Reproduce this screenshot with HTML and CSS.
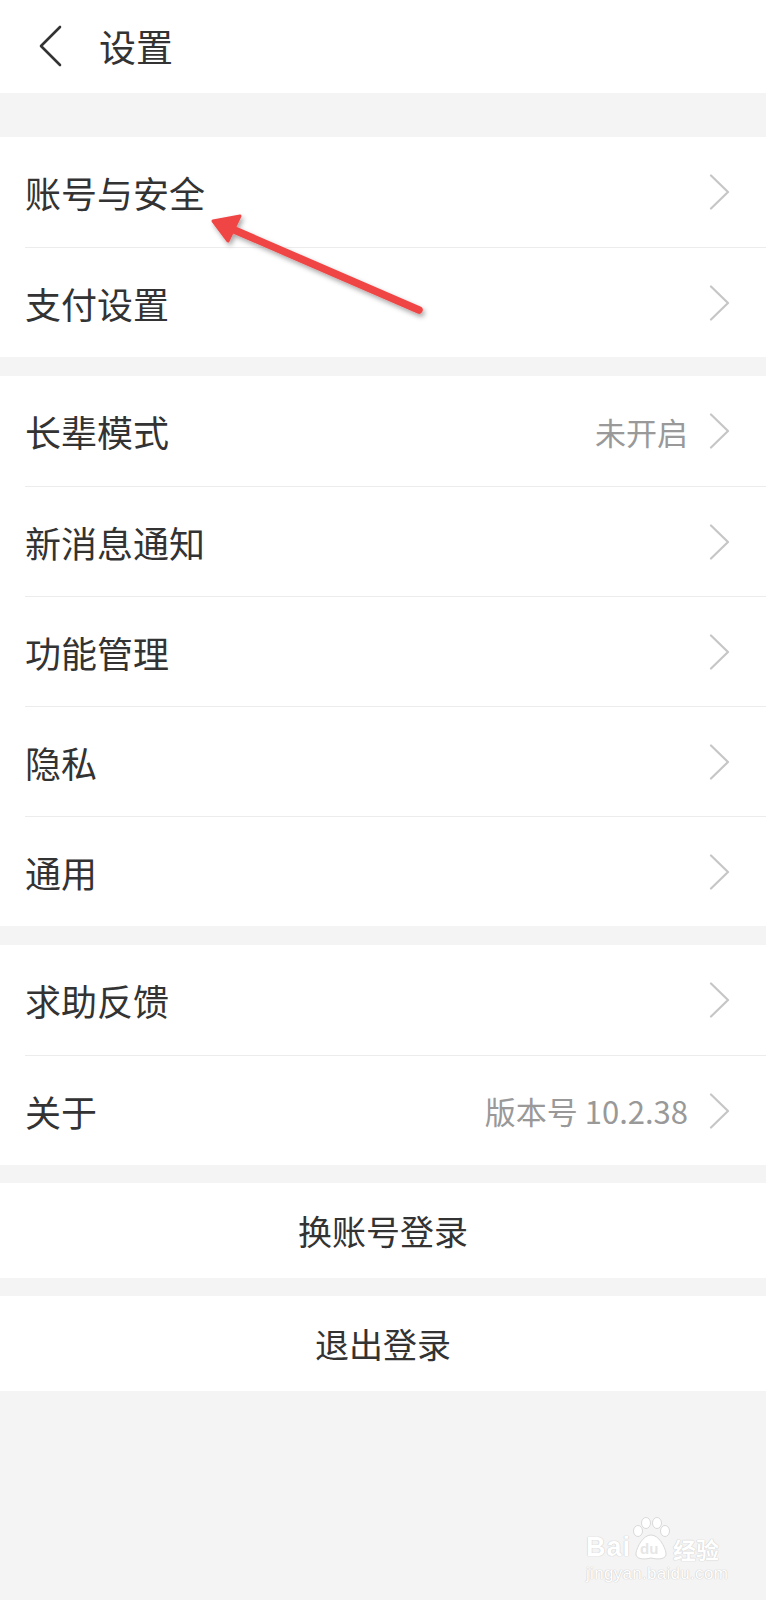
FILE: index.html
```html
<!DOCTYPE html>
<html lang="zh-CN">
<head>
<meta charset="utf-8">
<title>设置</title>
<link rel="stylesheet" href="styles.css">
</head>
<body>
<div class="page">
  <header class="topbar">
    <svg class="back" width="26" height="42" viewBox="0 0 26 42"><path d="M23 2 L4 21 L23 40" fill="none" stroke="#333" stroke-width="2.6" stroke-linecap="round" stroke-linejoin="round"/></svg>
    <h1 class="title">设置</h1>
  </header>

  <section class="group first">
    <div class="row"><span class="label">账号与安全</span><svg class="chev" width="21" height="36" viewBox="0 0 21 36"><path d="M2 1.5 L19 18 L2 34.5"/></svg></div>
    <div class="row"><span class="label">支付设置</span><svg class="chev" width="21" height="36" viewBox="0 0 21 36"><path d="M2 1.5 L19 18 L2 34.5"/></svg></div>
  </section>

  <section class="group">
    <div class="row"><span class="label">长辈模式</span><span class="value">未开启</span><svg class="chev" width="21" height="36" viewBox="0 0 21 36"><path d="M2 1.5 L19 18 L2 34.5"/></svg></div>
    <div class="row"><span class="label">新消息通知</span><svg class="chev" width="21" height="36" viewBox="0 0 21 36"><path d="M2 1.5 L19 18 L2 34.5"/></svg></div>
    <div class="row"><span class="label">功能管理</span><svg class="chev" width="21" height="36" viewBox="0 0 21 36"><path d="M2 1.5 L19 18 L2 34.5"/></svg></div>
    <div class="row"><span class="label">隐私</span><svg class="chev" width="21" height="36" viewBox="0 0 21 36"><path d="M2 1.5 L19 18 L2 34.5"/></svg></div>
    <div class="row"><span class="label">通用</span><svg class="chev" width="21" height="36" viewBox="0 0 21 36"><path d="M2 1.5 L19 18 L2 34.5"/></svg></div>
  </section>

  <section class="group">
    <div class="row"><span class="label">求助反馈</span><svg class="chev" width="21" height="36" viewBox="0 0 21 36"><path d="M2 1.5 L19 18 L2 34.5"/></svg></div>
    <div class="row"><span class="label">关于</span><span class="value">版本号 10.2.38</span><svg class="chev" width="21" height="36" viewBox="0 0 21 36"><path d="M2 1.5 L19 18 L2 34.5"/></svg></div>
  </section>

  <div class="btn">换账号登录</div>
  <div class="btn">退出登录</div>

  <svg class="annot" width="766" height="400" viewBox="0 0 766 400">
    <defs>
      <filter id="sh" x="-20%" y="-20%" width="140%" height="140%">
        <feDropShadow dx="2" dy="3" stdDeviation="2.5" flood-color="#000" flood-opacity="0.35"/>
      </filter>
    </defs>
    <g filter="url(#sh)">
      <line x1="419" y1="310" x2="232" y2="229" stroke="#f04545" stroke-width="7.5" stroke-linecap="round"/>
      <polygon points="213,221 240,216 228,241" fill="#f04545" stroke="#f04545" stroke-width="3" stroke-linejoin="round"/>
    </g>
  </svg>

  <div class="wm">
    <div class="wm-top">
      <span class="wm-bai">Bai</span>
      <span class="wm-paw">
        <svg width="40" height="44" viewBox="0 0 40 44">
          <g fill="#fff" stroke="#d9d9d9" stroke-width="1">
            <ellipse cx="7" cy="14" rx="4.5" ry="5.5"/>
            <ellipse cx="15" cy="6" rx="4.5" ry="5.5"/>
            <ellipse cx="26" cy="6" rx="4.5" ry="5.5"/>
            <ellipse cx="34" cy="14" rx="4.5" ry="5.5"/>
            <path d="M20 18 C 12 18 6 30 5 36 C 4 42 12 43 20 41 C 28 43 36 42 35 36 C 34 30 28 18 20 18 Z"/>
          </g>
        </svg>
        <span class="wm-du">du</span>
      </span>
      <span class="wm-jy">经验</span>
    </div>
    <div class="wm-url">jingyan.baidu.com</div>
  </div>
</div>
</body>
</html>
```

FILE: styles.css
```css
html, body {
  margin: 0;
  padding: 0;
}
body {
  background: #f4f4f4;
  font-family: "Noto Sans CJK SC", "Noto Sans", sans-serif;
  color: #333;
}
.page {
  position: relative;
  width: 766px;
  min-height: 1600px;
}
.topbar {
  height: 93px;
  background: #fff;
  display: flex;
  align-items: center;
  padding-left: 37px;
}
.back {
  display: block;
  margin-top: -2px;
}
.title {
  margin: 0 0 0 36px;
  font-size: 37px;
  font-weight: normal;
  line-height: 1;
  color: #333;
}
.group {
  background: #fff;
  margin-top: 19px;
}
.group.first {
  margin-top: 44px;
}
.row {
  height: 110px;
  box-sizing: border-box;
  margin-left: 25px;
  padding-right: 36px;
  display: flex;
  align-items: center;
}
.row + .row {
  border-top: 1px solid #ececec;
}
.label {
  flex: 1;
  font-size: 36px;
  line-height: 1;
  color: #333;
}
.value {
  font-size: 31px;
  line-height: 1;
  color: #999;
  margin-right: 21px;
}
.chev {
  display: block;
  flex: none;
  fill: none;
  stroke: #c6c6c6;
  stroke-width: 2.2;
  stroke-linecap: round;
  stroke-linejoin: round;
}
.btn {
  background: #fff;
  height: 95px;
  margin-top: 18px;
  display: flex;
  align-items: center;
  justify-content: center;
  font-size: 34px;
  line-height: 1;
  color: #333;
}
.annot {
  position: absolute;
  left: 0;
  top: 0;
  pointer-events: none;
}
.wm {
  position: absolute;
  left: 586px;
  top: 1515px;
  width: 140px;
  color: #fff;
  text-shadow: 0 0 1px #c8c8c8, 0 0 1px #c8c8c8;
}
.wm-top {
  display: flex;
  align-items: flex-end;
  height: 46px;
}
.wm-bai {
  font-family: "Liberation Sans", sans-serif;
  font-weight: bold;
  font-size: 27px;
  line-height: 1;
  letter-spacing: 1px;
}
.wm-paw {
  position: relative;
  width: 40px;
  height: 44px;
  flex: none;
}
.wm-paw svg {
  display: block;
}
.wm-du {
  position: absolute;
  left: 9px;
  bottom: 5px;
  font-family: "Liberation Sans", sans-serif;
  font-weight: bold;
  font-size: 15px;
  line-height: 1;
  color: #e6e6e6;
  text-shadow: none;
}
.wm-jy {
  font-size: 23px;
  line-height: 1;
  font-weight: bold;
  margin-left: 2px;
}
.wm-url {
  font-family: "Liberation Sans", sans-serif;
  font-size: 17px;
  line-height: 20px;
  letter-spacing: 0.3px;
  margin-top: 3px;
}
```
